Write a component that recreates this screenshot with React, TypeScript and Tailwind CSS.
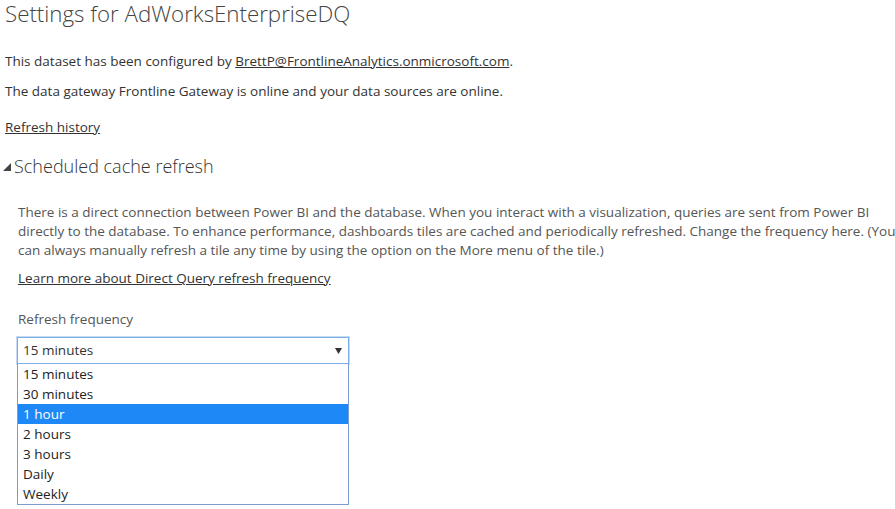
import React from "react";

const options = ["15 minutes", "30 minutes", "1 hour", "2 hours", "3 hours", "Daily", "Weekly"];

export default function App() {
  return (
    <div
      className="w-[895px] h-[509px] overflow-hidden bg-white text-[#333333]"
      style={{ fontFamily: '"Segoe UI", "Open Sans", "Noto Sans", sans-serif' }}
    >
      <div className="pl-[5px]">
        <h1 className="text-[22.3px] font-light leading-[28px] text-[#444444] whitespace-nowrap">
          Settings for AdWorksEnterpriseDQ
        </h1>
        <p className="mt-[24px] text-[13.5px] leading-[18px] whitespace-nowrap">
          This dataset has been configured by{" "}
          <a className="underline text-[#333333]">BrettP@FrontlineAnalytics.onmicrosoft.com</a>.
        </p>
        <p className="mt-[12px] text-[13.5px] leading-[18px] whitespace-nowrap">
          The data gateway Frontline Gateway is online and your data sources are online.
        </p>
        <p className="mt-[18px] text-[13.5px] leading-[18px]">
          <a className="underline text-[#333333]">Refresh history</a>
        </p>
      </div>
      <div className="mt-[18px] flex items-center pl-[3px]">
        <svg width="8" height="8" viewBox="0 0 8 8" className="mr-[3px] mt-[2px]">
          <polygon points="8,0 8,8 0,8" fill="#444444" />
        </svg>
        <h2 className="text-[18px] font-light leading-[24px] text-[#333333]">Scheduled cache refresh</h2>
      </div>
      <div className="pl-[18px] mt-[25px]">
        <div className="text-[13.5px] leading-[19px] text-[#555555] whitespace-nowrap">
          <div>There is a direct connection between Power BI and the database. When you interact with a visualization, queries are sent from Power BI</div>
          <div>directly to the database. To enhance performance, dashboards tiles are cached and periodically refreshed. Change the frequency here. (You</div>
          <div>can always manually refresh a tile any time by using the option on the More menu of the tile.)</div>
        </div>
        <p className="mt-[9px] text-[13.5px] leading-[18px]">
          <a className="underline text-[#333333]">Learn more about Direct Query refresh frequency</a>
        </p>
        <p className="mt-[23px] text-[13.5px] leading-[18px] text-[#555555]">Refresh frequency</p>
        <div className="mt-[9px] ml-[-1px] w-[332px]">
          <div className="h-[27px] border border-[#7eaee6] shadow-[0_0_0_1px_#c5daf5] flex items-center justify-between pl-[5px] pr-[6px] text-[13.5px] text-[#333333]">
            <span>15 minutes</span>
            <svg width="7" height="6" viewBox="0 0 7 6">
              <polygon points="0,0 7,0 3.5,6" fill="#333333" />
            </svg>
          </div>
          <div className="border border-[#7a9ad0] border-t-0 bg-white">
            {options.map((o) => (
              <div
                key={o}
                className={
                  "h-[20px] leading-[20px] pl-[5px] text-[13.5px] " +
                  (o === "1 hour" ? "bg-[#1e88f6] text-white" : "text-[#222222]")
                }
              >
                {o}
              </div>
            ))}
          </div>
        </div>
      </div>
    </div>
  );
}
